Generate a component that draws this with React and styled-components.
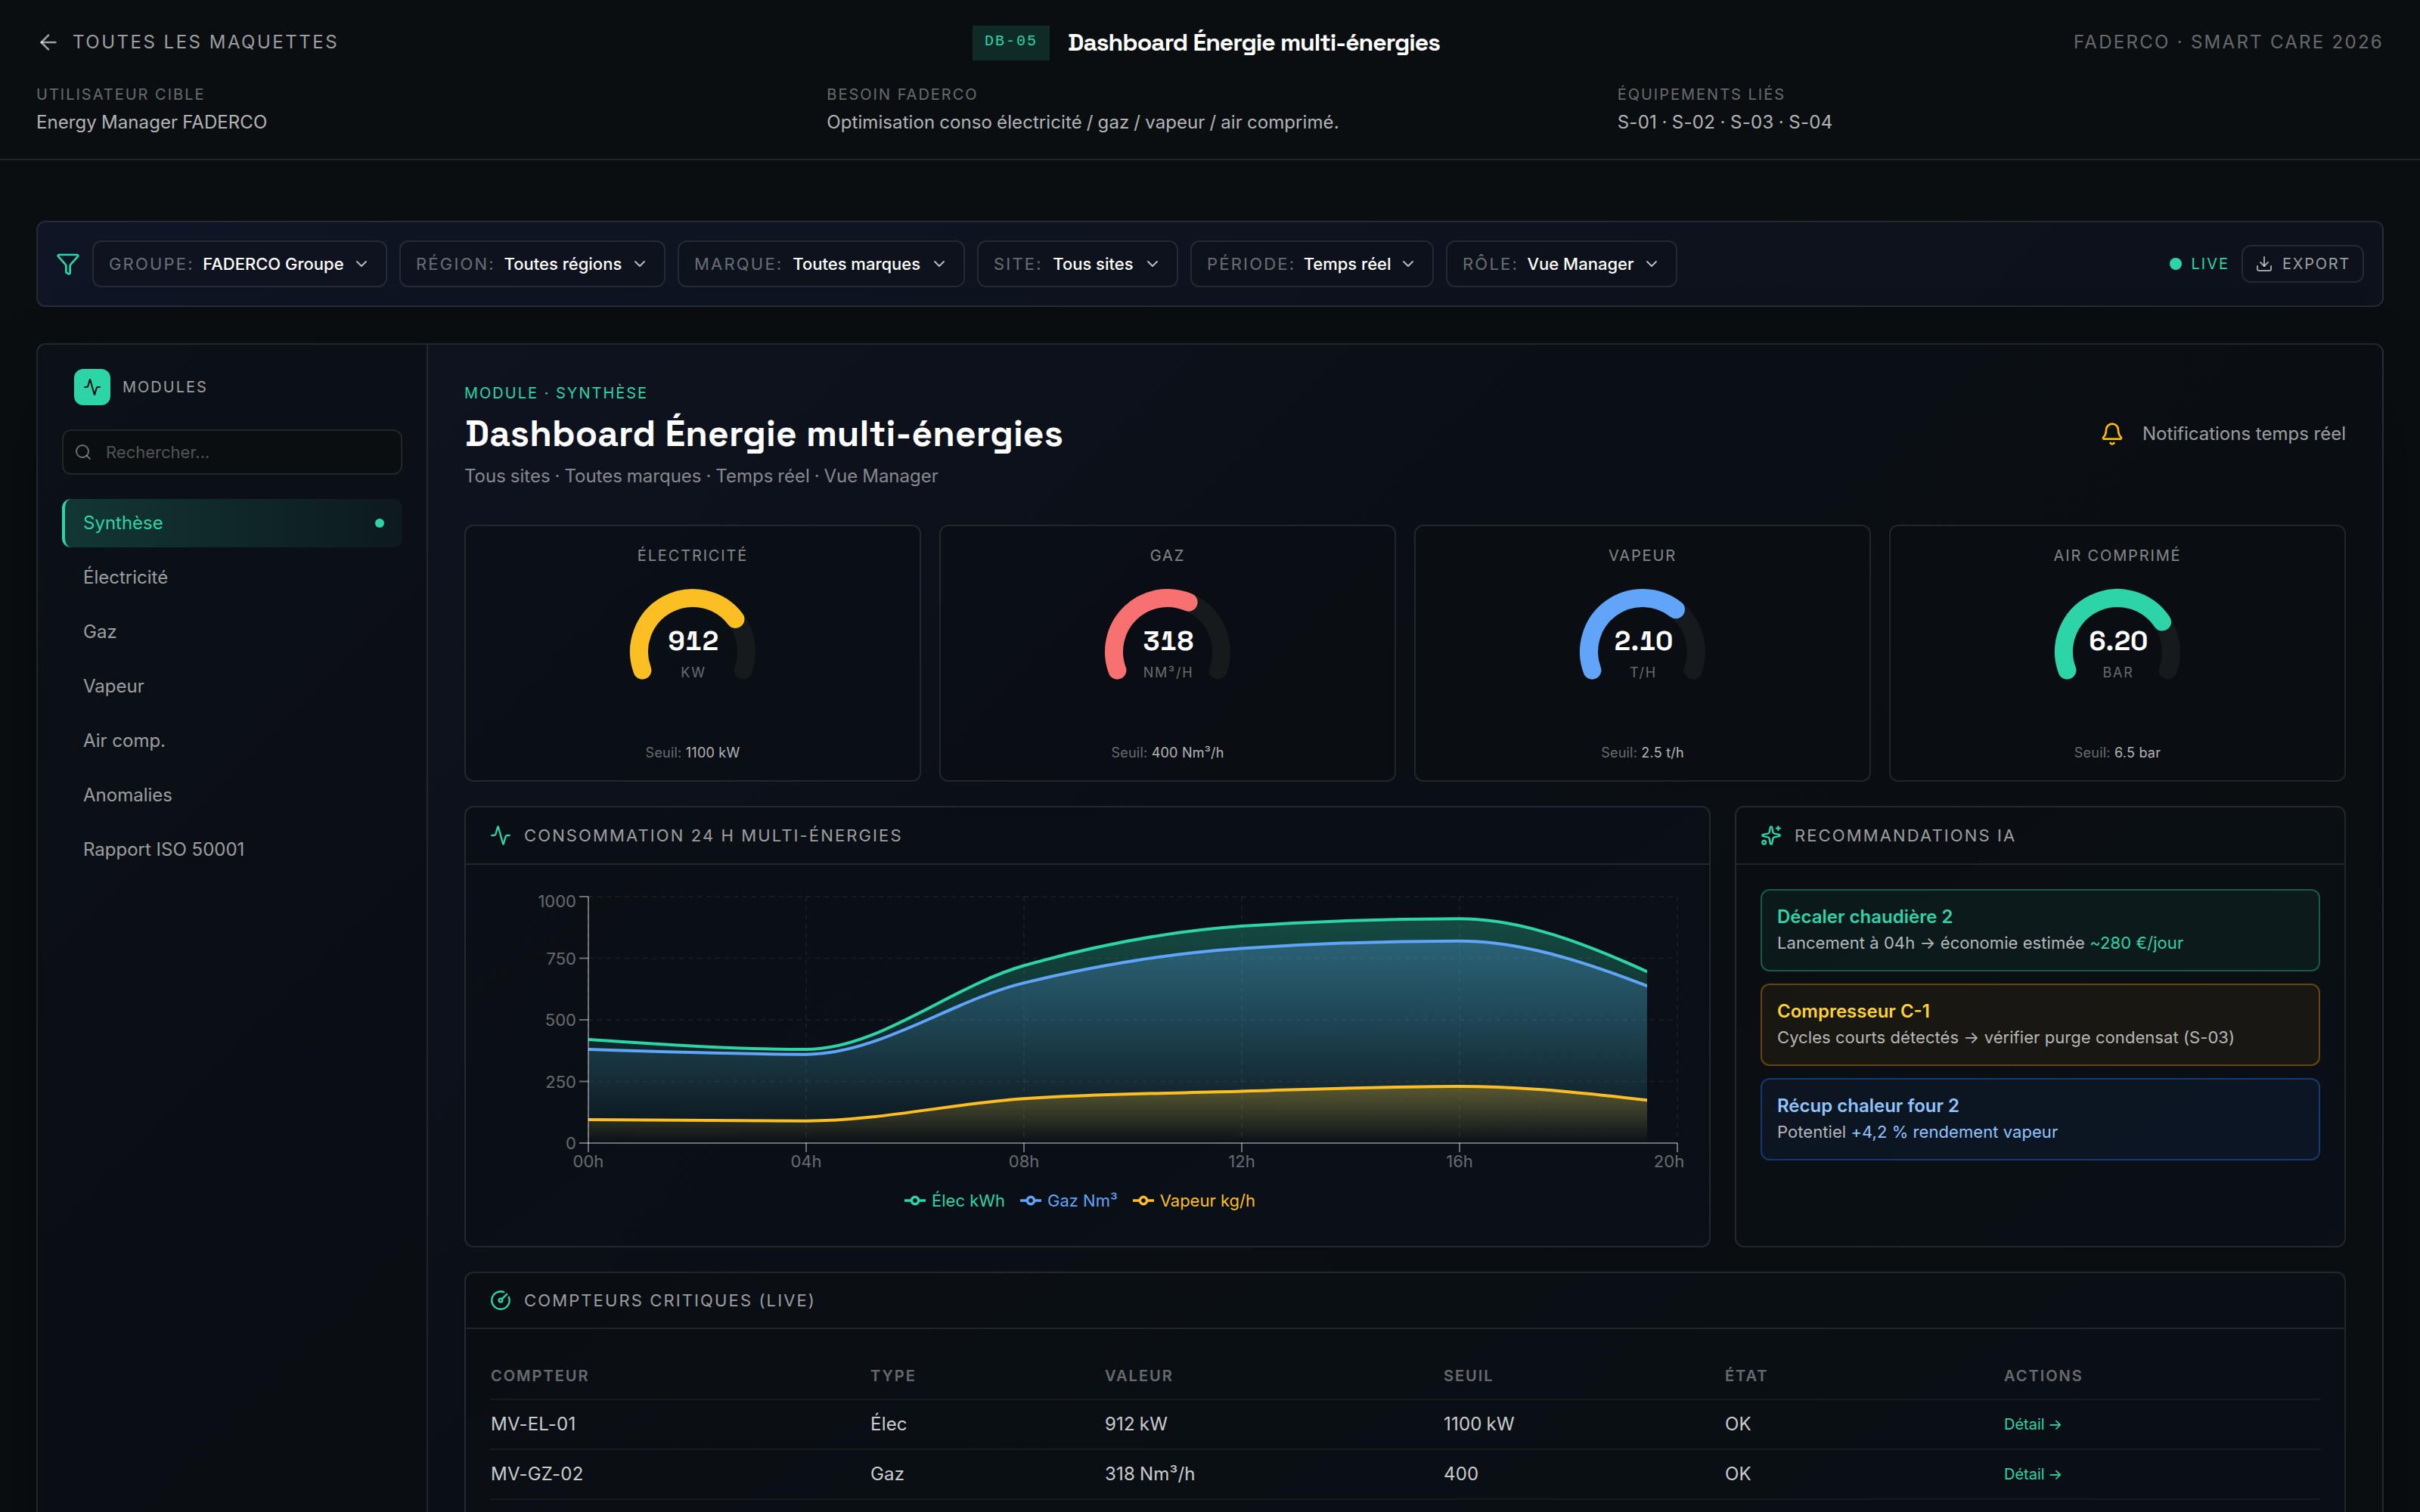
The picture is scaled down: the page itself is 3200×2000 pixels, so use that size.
import styled, { createGlobalStyle, css } from 'styled-components';
import { Activity, ArrowLeft, Bell, ChevronDown, CircleGauge, Download, Funnel, Search, Sparkles } from 'lucide-react';

const GREEN = '#2dd4a7';
const BLUE = '#60a5fa';
const YELLOW = '#fbbf24';
const RED = '#f87171';
const LINE = 'rgba(255, 255, 255, 0.1)';

const GlobalStyle = createGlobalStyle`
  * {
    box-sizing: border-box;
  }
  html,
  body {
    margin: 0;
    background: #0a0e11;
  }
  body {
    height: 2000px;
    overflow: hidden;
    font-family: Inter, 'Liberation Sans', sans-serif;
    font-size: 24px;
    line-height: 36px;
    color: #fff;
    -webkit-font-smoothing: antialiased;
  }
  svg {
    flex-shrink: 0;
  }
`;

const Page = styled.div`
  height: 2000px;
  overflow: hidden;
`;

const caps = css`
  text-transform: uppercase;
  letter-spacing: 0.1em;
`;

/* ---------- top header ---------- */

const Header = styled.header`
  height: 212px;
  padding: 32px 48px 0;
  border-bottom: 2px solid ${LINE};
`;

const TitleRow = styled.div`
  display: flex;
  justify-content: space-between;
  align-items: center;
  height: 48px;
`;

const BackLink = styled.a`
  ${caps}
  display: flex;
  align-items: center;
  gap: 16px;
  letter-spacing: 2.5px;
  color: rgba(255, 255, 255, 0.6);
`;

const Heading = styled.div`
  display: flex;
  align-items: center;
  gap: 24px;
`;

const Code = styled.span`
  height: 46px;
  margin-top: 2px;
  padding: 6px 16px;
  background: rgba(45, 212, 167, 0.15);
  color: ${GREEN};
  font: 20px/30px 'Liberation Mono', monospace;
  letter-spacing: 0.1em;
`;

const HeaderTitle = styled.h1`
  margin: 0;
  font-family: 'Space Grotesk', Inter, sans-serif;
  font-size: 32px;
  font-weight: 600;
  letter-spacing: -1px;
`;

const Brand = styled.span`
  ${caps}
  letter-spacing: 2.28px;
  color: rgba(255, 255, 255, 0.4);
`;

const MetaRow = styled.div`
  display: grid;
  grid-template-columns: repeat(3, 1fr);
  gap: 32px;
  margin-top: 30px;
`;

const MetaLabel = styled.div`
  ${caps}
  font-size: 20px;
  line-height: 30px;
  color: rgba(255, 255, 255, 0.4);
`;

const MetaValue = styled.div`
  margin-top: 4px;
  letter-spacing: ${({ $track }) => $track || 0.08}px;
  word-spacing: -0.75px;
  color: rgba(255, 255, 255, 0.7);
`;

/* ---------- filters ---------- */

const Content = styled.main`
  padding: 80px 48px 0;
`;

const FilterBar = styled.div`
  display: flex;
  align-items: center;
  gap: 16px;
  height: 114px;
  padding: 0 24px;
  border: 2px solid ${LINE};
  border-radius: 12px;
  background: linear-gradient(135deg, #0f1524, #0c111a);
`;

const Chip = styled.button`
  display: flex;
  align-items: center;
  justify-content: space-between;
  width: ${({ $width }) => $width}px;
  height: 62px;
  padding: 0 20px;
  border: 2px solid ${LINE};
  border-radius: 12px;
  background: rgba(10, 14, 17, 0.2);
  color: #fff;
  font: 500 22px/33px Inter, sans-serif;
  white-space: nowrap;

  svg {
    color: rgba(255, 255, 255, 0.7);
  }
`;

const ChipLabel = styled.span`
  ${caps}
  font-weight: 400;
  color: rgba(255, 255, 255, 0.4);
`;

const Live = styled.span`
  ${caps}
  display: flex;
  align-items: center;
  gap: 12px;
  margin-left: auto;
  font-size: 20px;
  line-height: 30px;
  color: ${GREEN};

  &::before {
    content: '';
    width: 16px;
    height: 16px;
    border-radius: 50%;
    background: ${GREEN};
  }
`;

const ExportButton = styled.button`
  ${caps}
  display: flex;
  align-items: center;
  gap: 12px;
  height: 50px;
  padding: 0 16px;
  border: 2px solid ${LINE};
  border-radius: 12px;
  background: none;
  color: rgba(255, 255, 255, 0.6);
  font: 20px/30px Inter, sans-serif;
  letter-spacing: 1.75px;
`;

/* ---------- shell ---------- */

const Shell = styled.section`
  display: flex;
  height: 1800px;
  margin-top: 48px;
  border: 2px solid ${LINE};
  border-radius: 12px;
  background: linear-gradient(135deg, #0f1422 0%, #0a0f16 45%, #0a0e11 75%);
  box-shadow: 0 50px 100px -24px rgba(0, 0, 0, 0.5);
  overflow: hidden;
`;

const Sidebar = styled.aside`
  flex: 0 0 516px;
  padding: 32px;
  border-right: 2px solid ${LINE};
  background: rgba(10, 14, 17, 0.6);
`;

const SidebarHead = styled.div`
  ${caps}
  display: flex;
  align-items: center;
  gap: 16px;
  padding: 0 16px;
  font-size: 20px;
  line-height: 30px;
  color: rgba(255, 255, 255, 0.6);
`;

const Logo = styled.span`
  display: grid;
  place-items: center;
  width: 48px;
  height: 48px;
  border-radius: 12px;
  background: ${GREEN};
  color: #0a0e11;
`;

const SearchBox = styled.div`
  display: flex;
  align-items: center;
  gap: 18px;
  height: 60px;
  margin: 32px 0;
  padding: 0 14px;
  border: 2px solid ${LINE};
  border-radius: 12px;
  background: #0a0e11;
  font-size: 22px;
  color: rgba(255, 255, 255, 0.3);

  svg {
    color: rgba(255, 255, 255, 0.4);
  }
`;

const Nav = styled.nav`
  display: flex;
  flex-direction: column;
  gap: 8px;
`;

const NavItem = styled.a`
  display: flex;
  align-items: center;
  justify-content: space-between;
  height: 64px;
  padding: 0 24px;
  border-left: 4px solid transparent;
  border-radius: 12px;
  color: rgba(255, 255, 255, 0.6);

  ${({ $active }) =>
    $active &&
    css`
      border-left-color: ${GREEN};
      background: linear-gradient(90deg, rgba(45, 212, 167, 0.2), rgba(45, 212, 167, 0.05));
      color: ${GREEN};

      &::after {
        content: '';
        width: 12px;
        height: 12px;
        border-radius: 50%;
        background: ${GREEN};
      }
    `}
`;

const Board = styled.div`
  flex: 1;
  padding: 48px;
`;

const BoardHead = styled.div`
  display: flex;
  justify-content: space-between;
  align-items: center;
  height: 142px;
  margin-bottom: 48px;
`;

const Eyebrow = styled.div`
  ${caps}
  margin-top: 2px;
  font-size: 20px;
  line-height: 30px;
  color: ${GREEN};
`;

const BoardTitle = styled.h2`
  margin: 9px 0 8px 1px;
  font-family: 'Space Grotesk', Inter, sans-serif;
  font-size: 48px;
  line-height: 60px;
  font-weight: 700;
  letter-spacing: 0.16px;
`;

const Subtitle = styled.div`
  word-spacing: -0.8px;
  color: rgba(255, 255, 255, 0.5);
`;

const Notice = styled.div`
  display: flex;
  align-items: center;
  gap: 24px;
  padding-bottom: 2px;
  color: rgba(255, 255, 255, 0.6);

  svg {
    color: #ffb900;
  }
`;

/* ---------- cards ---------- */

const Kpis = styled.div`
  display: grid;
  grid-template-columns: repeat(4, 1fr);
  gap: 24px;
  margin-bottom: 32px;
`;

const KpiCard = styled.div`
  display: flex;
  flex-direction: column;
  align-items: center;
  height: 340px;
  padding: 24px;
  border: 2px solid ${LINE};
  border-radius: 12px;
  background: rgba(10, 14, 18, 0.6);
`;

const KpiLabel = styled.div`
  ${caps}
  font-size: 20px;
  line-height: 30px;
  letter-spacing: 1.85px;
  color: rgba(255, 255, 255, 0.5);
`;

const Threshold = styled.div`
  font-size: 18px;
  line-height: 27px;
  letter-spacing: 0.22px;
  color: rgba(255, 255, 255, 0.4);

  span {
    color: rgba(255, 255, 255, 0.7);
  }
`;

const GaugeValue = styled.text`
  font-family: 'Space Grotesk', Inter, sans-serif;
  font-size: 36px;
  font-weight: 700;
  font-variant-numeric: tabular-nums;
  fill: #fff;
`;

const GaugeUnit = styled.text`
  font-size: 18px;
  letter-spacing: 0.1em;
  fill: rgba(255, 255, 255, 0.4);
`;

const Row = styled.div`
  display: grid;
  grid-template-columns: 1648px 808px;
  gap: 32px;
  margin-bottom: 32px;
`;

const Card = styled.div`
  height: ${({ $height }) => $height}px;
  border: 2px solid ${LINE};
  border-radius: 12px;
  background: linear-gradient(145deg, rgba(10, 14, 18, 0.6), rgba(12, 19, 30, 0.5));
`;

const CardHead = styled.div`
  ${caps}
  display: flex;
  align-items: center;
  gap: 17px;
  height: ${({ $height }) => $height || 76}px;
  padding: 0 32px;
  border-bottom: 2px solid ${LINE};
  font-size: 22px;
  line-height: 33px;
  letter-spacing: 2.12px;
  color: rgba(255, 255, 255, 0.6);

  svg {
    color: ${GREEN};
  }
`;

const CardBody = styled.div`
  padding: 32px;
`;

const ChartSvg = styled.svg`
  display: block;
`;

const AxisText = styled.text`
  font-size: 22px;
  fill: rgba(255, 255, 255, 0.4);
`;

const Legend = styled.div`
  display: flex;
  justify-content: center;
  gap: 20px;
  margin-top: -6px;
  padding-right: 20px;
  font-size: 22px;
  line-height: 36px;
`;

const LegendItem = styled.span`
  display: flex;
  align-items: center;
  gap: 8px;
  color: ${({ $color }) => $color};
`;

const tones = {
  green: { text: GREEN, bg: 'rgba(45, 212, 167, 0.06)', border: 'rgba(45, 212, 167, 0.35)' },
  amber: { text: '#ffd230', bg: 'rgba(254, 154, 0, 0.06)', border: 'rgba(254, 154, 0, 0.35)' },
  blue: { text: '#8ec5ff', bg: 'rgba(43, 127, 255, 0.06)', border: 'rgba(43, 127, 255, 0.35)' },
};

const Advices = styled.div`
  display: flex;
  flex-direction: column;
  gap: 16px;
`;

const Advice = styled.div`
  height: 109px;
  padding: 20px;
  border: 2px solid ${({ $tone }) => tones[$tone].border};
  border-radius: 12px;
  background: ${({ $tone }) => tones[$tone].bg};
  font-size: 22px;
  line-height: 30px;
  letter-spacing: 0.06px;
  color: rgba(255, 255, 255, 0.7);

  strong {
    display: block;
    margin-bottom: 4px;
    font-size: 24px;
    font-weight: 600;
    letter-spacing: 0;
    color: ${({ $tone }) => tones[$tone].text};
  }

  em {
    font-style: normal;
    color: ${({ $tone }) => tones[$tone].text};
  }
`;

/* ---------- table ---------- */

const Table = styled.div`
  display: flex;
  flex-direction: column;
`;

const TableRow = styled.div`
  display: grid;
  grid-template-columns: 502px 310px 448px 372px 369px 1fr;
  align-items: center;
  height: ${({ $head }) => ($head ? 62 : 66)}px;
  padding-left: 1px;
  border-bottom: 2px solid rgba(255, 255, 255, 0.05);
  letter-spacing: 0.2px;
  word-spacing: -1px;
  color: rgba(255, 255, 255, 0.8);

  ${({ $head }) =>
    $head &&
    css`
      ${caps}
      padding-bottom: 1px;
      font-size: 20px;
      line-height: 30px;
      font-weight: 600;
      color: rgba(255, 255, 255, 0.4);
    `}
`;

const DetailLink = styled.a`
  font-size: 20px;
  letter-spacing: 0;
  color: ${GREEN};
`;

const filters = [
  { label: 'Groupe', value: 'FADERCO Groupe', width: 390 },
  { label: 'Région', value: 'Toutes régions', width: 352 },
  { label: 'Marque', value: 'Toutes marques', width: 380 },
  { label: 'Site', value: 'Tous sites', width: 266 },
  { label: 'Période', value: 'Temps réel', width: 322 },
  { label: 'Rôle', value: 'Vue Manager', width: 306 },
];

const modules = ['Synthèse', 'Électricité', 'Gaz', 'Vapeur', 'Air comp.', 'Anomalies', 'Rapport ISO 50001'];

const kpis = [
  { label: 'Électricité', value: '912', unit: 'KW', ratio: 0.76, color: YELLOW, limit: '1100 kW' },
  { label: 'Gaz', value: '318', unit: 'NM³/H', ratio: 0.636, color: RED, limit: '400 Nm³/h' },
  { label: 'Vapeur', value: '2.10', unit: 'T/H', ratio: 0.7, color: BLUE, limit: '2.5 t/h' },
  { label: 'Air comprimé', value: '6.20', unit: 'BAR', ratio: 0.775, color: GREEN, limit: '6.5 bar' },
];

const hours = ['00h', '04h', '08h', '12h', '16h', '20h'];

const series = [
  { id: 'elec', name: 'Élec kWh', color: GREEN, data: [420, 380, 720, 880, 910, 640] },
  { id: 'gaz', name: 'Gaz Nm³', color: BLUE, data: [380, 360, 650, 790, 820, 590] },
  { id: 'vapeur', name: 'Vapeur kg/h', color: YELLOW, data: [95, 90, 180, 210, 230, 160] },
];

const meters = [
  ['MV-EL-01', 'Élec', '912 kW', '1100 kW', 'OK'],
  ['MV-GZ-02', 'Gaz', '318 Nm³/h', '400', 'OK'],
];

// arc between two angles (degrees, counter-clockwise from the right)
function arc(from, to) {
  const r = 71;
  const point = (deg) => {
    const a = (deg * Math.PI) / 180;
    return `${(120 + r * Math.cos(a)).toFixed(2)} ${(112 - r * Math.sin(a)).toFixed(2)}`;
  };
  return `M${point(from)} A${r} ${r} 0 ${from - to > 180 ? 1 : 0} 1 ${point(to)}`;
}

function GaugeChart({ value, unit, ratio, color }) {
  const cap = 9.73;
  return (
    <svg width="240" height="232" viewBox="0 0 240 232" fill="none" strokeWidth="24" strokeLinecap="round">
      <path d={arc(210 - cap, -30 + cap)} stroke="#161a1d" />
      <path d={arc(210 - cap, 210 - 240 * ratio + cap)} stroke={color} />
      <GaugeValue x="121" y="110" textAnchor="middle" strokeWidth="0">
        {value}
      </GaugeValue>
      <GaugeUnit x="121" y="146" textAnchor="middle" strokeWidth="0">
        {unit}
      </GaugeUnit>
    </svg>
  );
}

const X0 = 130;
const X1 = 1570;
const STEP = 288;
const Y0 = 336;
const px = (i) => X0 + i * STEP;
const py = (v) => Y0 - v * 0.326;

// monotone cubic through the points
function curve(data) {
  const n = data.length;
  const ys = data.map(py);
  const slopes = ys.slice(1).map((y, i) => (y - ys[i]) / STEP);
  const t = new Array(n).fill(0);
  for (let i = 1; i < n - 1; i++) {
    const a = slopes[i - 1];
    const b = slopes[i];
    const p = (a + b) / 2;
    t[i] = (Math.sign(a) + Math.sign(b)) * Math.min(Math.abs(a), Math.abs(b), 0.5 * Math.abs(p)) || 0;
  }
  t[0] = (3 * slopes[0] - t[1]) / 2;
  t[n - 1] = (3 * slopes[n - 2] - t[n - 2]) / 2;
  let d = `M${px(0)},${ys[0]}`;
  for (let i = 0; i < n - 1; i++) {
    const k = STEP / 3;
    d += `C${px(i) + k},${ys[i] + t[i] * k} ${px(i + 1) - k},${ys[i + 1] - t[i + 1] * k} ${px(i + 1)},${ys[i + 1]}`;
  }
  return d;
}

function AreaChart() {
  return (
    <ChartSvg width="1580" height="400" viewBox="0 0 1580 400" fill="none">
      <defs>
        {series.map((s) => (
          <linearGradient key={s.id} id={s.id} x1="0" y1="0" x2="0" y2="1">
            <stop offset="0" stopColor={s.color} stopOpacity="0.3" />
            <stop offset="1" stopColor={s.color} stopOpacity="0" />
          </linearGradient>
        ))}
        <clipPath id="reveal">
          <rect x={X0} y="0" width="1400" height="340" />
        </clipPath>
      </defs>
      <g stroke="rgba(255,255,255,0.06)" strokeWidth="2" strokeDasharray="6 6">
        {[1000, 750, 500, 250].map((v) => (
          <path key={v} d={`M${X0} ${py(v)}H${X1}`} />
        ))}
        {hours.map((h, i) => (
          <path key={h} d={`M${px(i)} 10V${Y0}`} />
        ))}
      </g>
      <g clipPath="url(#reveal)">
        {series.map((s) => (
          <g key={s.id}>
            <path d={`${curve(s.data)}V${Y0}H${X0}Z`} fill={`url(#${s.id})`} />
            <path d={curve(s.data)} stroke={s.color} strokeWidth="4" />
          </g>
        ))}
      </g>
      <g stroke="rgba(255,255,255,0.4)" strokeWidth="2">
        <path d={`M${X0} ${Y0}H${X1}`} />
        <path d={`M${X0} 10V${Y0}`} />
        {hours.map((h, i) => (
          <path key={h} d={`M${px(i)} ${Y0}v12`} />
        ))}
        {[0, 250, 500, 750, 1000].map((v) => (
          <path key={v} d={`M${X0} ${py(v)}h-12`} />
        ))}
      </g>
      {hours.map((h, i) => (
        <AxisText key={h} x={i === 5 ? 1559 : px(i)} y="368" textAnchor="middle">
          {h}
        </AxisText>
      ))}
      {[0, 250, 500, 750, 1000].map((v) => (
        <AxisText key={v} x="114" y={py(v) + (v === 1000 ? 14 : 8)} textAnchor="end">
          {v}
        </AxisText>
      ))}
    </ChartSvg>
  );
}

function LegendMark() {
  return (
    <svg width="28" height="28" viewBox="0 0 32 32" fill="none" stroke="currentColor" strokeWidth="4">
      <path d="M0 16h10.67A5.33 5.33 0 1 1 21.33 16H32M21.33 16A5.33 5.33 0 1 1 10.67 16" />
    </svg>
  );
}

function App() {
  return (
    <Page>
      <GlobalStyle />
      <Header>
        <TitleRow>
          <BackLink>
            <ArrowLeft size={32} />
            Toutes les maquettes
          </BackLink>
          <Heading>
            <Code>DB-05</Code>
            <HeaderTitle>Dashboard Énergie multi-énergies</HeaderTitle>
          </Heading>
          <Brand>FADERCO · Smart Care 2026</Brand>
        </TitleRow>
        <MetaRow>
          <div>
            <MetaLabel>Utilisateur cible</MetaLabel>
            <MetaValue>Energy Manager FADERCO</MetaValue>
          </div>
          <div>
            <MetaLabel>Besoin FADERCO</MetaLabel>
            <MetaValue>Optimisation conso électricité / gaz / vapeur / air comprimé.</MetaValue>
          </div>
          <div>
            <MetaLabel>Équipements liés</MetaLabel>
            <MetaValue $track={0.28}>S-01 · S-02 · S-03 · S-04</MetaValue>
          </div>
        </MetaRow>
      </Header>

      <Content>
        <FilterBar>
          <Funnel size={32} color={GREEN} />
          {filters.map((f) => (
            <Chip key={f.label} $width={f.width}>
              <ChipLabel>{f.label}:</ChipLabel>
              {f.value}
              <ChevronDown size={24} />
            </Chip>
          ))}
          <Live>Live</Live>
          <ExportButton>
            <Download size={24} />
            Export
          </ExportButton>
        </FilterBar>

        <Shell>
          <Sidebar>
            <SidebarHead>
              <Logo>
                <Activity size={24} />
              </Logo>
              Modules
            </SidebarHead>
            <SearchBox>
              <Search size={24} />
              Rechercher...
            </SearchBox>
            <Nav>
              {modules.map((name, i) => (
                <NavItem key={name} $active={i === 0}>
                  {name}
                </NavItem>
              ))}
            </Nav>
          </Sidebar>

          <Board>
            <BoardHead>
              <div>
                <Eyebrow>Module · Synthèse</Eyebrow>
                <BoardTitle>Dashboard Énergie multi-énergies</BoardTitle>
                <Subtitle>Tous sites · Toutes marques · Temps réel · Vue Manager</Subtitle>
              </div>
              <Notice>
                <Bell size={32} />
                Notifications temps réel
              </Notice>
            </BoardHead>

            <Kpis>
              {kpis.map((k) => (
                <KpiCard key={k.label}>
                  <KpiLabel>{k.label}</KpiLabel>
                  <GaugeChart value={k.value} unit={k.unit} ratio={k.ratio} color={k.color} />
                  <Threshold>
                    Seuil: <span>{k.limit}</span>
                  </Threshold>
                </KpiCard>
              ))}
            </Kpis>

            <Row>
              <Card $height={584}>
                <CardHead>
                  <Activity size={28} />
                  Consommation 24 h multi-énergies
                </CardHead>
                <CardBody>
                  <AreaChart />
                  <Legend>
                    {series.map((s) => (
                      <LegendItem key={s.id} $color={s.color}>
                        <LegendMark />
                        {s.name}
                      </LegendItem>
                    ))}
                  </Legend>
                </CardBody>
              </Card>
              <Card $height={584}>
                <CardHead>
                  <Sparkles size={28} />
                  Recommandations IA
                </CardHead>
                <CardBody>
                  <Advices>
                    <Advice $tone="green">
                      <strong>Décaler chaudière 2</strong>
                      Lancement à 04h → économie estimée <em>~280 €/jour</em>
                    </Advice>
                    <Advice $tone="amber">
                      <strong>Compresseur C-1</strong>
                      Cycles courts détectés → vérifier purge condensat (S-03)
                    </Advice>
                    <Advice $tone="blue">
                      <strong>Récup chaleur four 2</strong>
                      Potentiel <em>+4,2 % rendement vapeur</em>
                    </Advice>
                  </Advices>
                </CardBody>
              </Card>
            </Row>

            <Card $height={420}>
              <CardHead $height={74}>
                <CircleGauge size={28} />
                Compteurs critiques (live)
              </CardHead>
              <CardBody>
                <Table>
                  <TableRow $head>
                    <span>Compteur</span>
                    <span>Type</span>
                    <span>Valeur</span>
                    <span>Seuil</span>
                    <span>État</span>
                    <span>Actions</span>
                  </TableRow>
                  {meters.map((row) => (
                    <TableRow key={row[0]}>
                      {row.map((cell, i) => (
                        <span key={i}>{cell}</span>
                      ))}
                      <DetailLink>Détail →</DetailLink>
                    </TableRow>
                  ))}
                </Table>
              </CardBody>
            </Card>
          </Board>
        </Shell>
      </Content>
    </Page>
  );
}

export default App;
